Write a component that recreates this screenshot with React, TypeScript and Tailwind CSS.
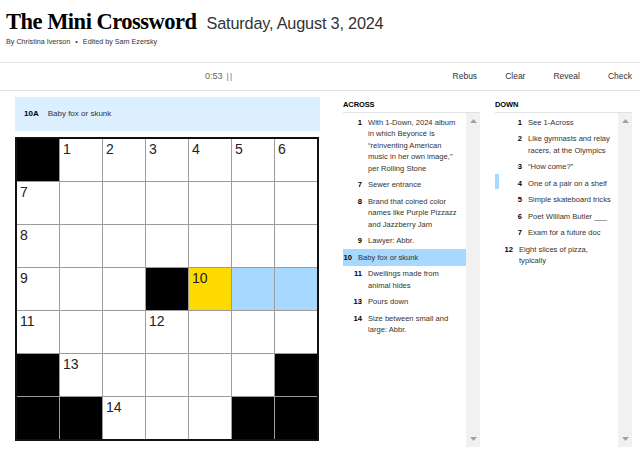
import React from "react"

type Cell = { n?: number; black?: boolean; tone?: "yellow" | "blue" }

const B: Cell = { black: true }
const E: Cell = {}

// grid 7x7
const grid: Cell[][] = [
  [B, { n: 1 }, { n: 2 }, { n: 3 }, { n: 4 }, { n: 5 }, { n: 6 }],
  [{ n: 7 }, E, E, E, E, E, E],
  [{ n: 8 }, E, E, E, E, E, E],
  [{ n: 9 }, E, E, B, { n: 10, tone: "yellow" }, { tone: "blue" }, { tone: "blue" }],
  [{ n: 11 }, E, E, { n: 12 }, E, E, E],
  [B, { n: 13 }, E, E, E, E, B],
  [B, B, { n: 14 }, E, E, B, B],
]

type Clue = { n: number; lines: string[]; active?: boolean; shift?: boolean; mark?: boolean }

const across: Clue[] = [
  {
    n: 1,
    lines: [
      "With 1-Down, 2024 album",
      "in which Beyoncé is",
      "\u201creinventing American",
      "music in her own image,\u201d",
      "per Rolling Stone",
    ],
  },
  { n: 7, lines: ["Sewer entrance"] },
  { n: 8, lines: ["Brand that coined color", "names like Purple Pizzazz", "and Jazzberry Jam"] },
  { n: 9, lines: ["Lawyer: Abbr."] },
  { n: 10, lines: ["Baby fox or skunk"], active: true, shift: true },
  { n: 11, lines: ["Dwellings made from", "animal hides"] },
  { n: 13, lines: ["Pours down"] },
  { n: 14, lines: ["Size between small and", "large: Abbr."] },
]

const down: Clue[] = [
  { n: 1, lines: ["See 1-Across"] },
  { n: 2, lines: ["Like gymnasts and relay", "racers, at the Olympics"] },
  { n: 3, lines: ["\u201cHow come?\u201d"] },
  { n: 4, lines: ["One of a pair on a shelf"], mark: true },
  { n: 5, lines: ["Simple skateboard tricks"] },
  { n: 6, lines: ["Poet William Butler ___"] },
  { n: 7, lines: ["Exam for a future doc"] },
  { n: 12, lines: ["Eight slices of pizza,", "typically"], shift: true },
]

function ClueList({ title, clues, numW, shiftW }: { title: string; clues: Clue[]; numW: string; shiftW: string }) {
  return (
    <div className="w-[137px] flex flex-col">
      <div className="h-[16px] pt-[2px] border-b border-[#e2e2e2] text-[7.5px] font-bold text-black leading-[11px] tracking-[-0.1px]">
        {title}
      </div>
      <div className="flex h-[334px]">
        <ul className="flex-1 pt-[1px]">
          {clues.map((c) => (
            <li
              key={c.n}
              className={`relative flex py-[2.5px] leading-[11.5px] text-[7.6px] ${c.active ? "bg-[#a7d8ff]" : ""}`}
            >
              {c.mark && <span className="absolute left-0 top-[-1px] h-[15px] w-[4px] bg-[#a7d8ff]" />}
              <span className={`${c.shift ? shiftW : numW} shrink-0 text-right font-bold text-black`}>{c.n}</span>
              <span className="pl-[6px] text-[#333] whitespace-nowrap">
                {c.lines.map((l, i) => (
                  <span key={i} className="block">
                    {l}
                  </span>
                ))}
              </span>
            </li>
          ))}
        </ul>
        <div className="w-[14px] bg-[#f1f1f1] flex flex-col items-center justify-between py-[6px]">
          <svg width="7" height="4" viewBox="0 0 7 4">
            <path d="M0 4 L3.5 0 L7 4 Z" fill="#a3a3a3" />
          </svg>
          <svg width="7" height="4" viewBox="0 0 7 4">
            <path d="M0 0 L3.5 4 L7 0 Z" fill="#a3a3a3" />
          </svg>
        </div>
      </div>
    </div>
  )
}

export default function App() {
  return (
    <div className="w-[640px] h-[451px] bg-white overflow-hidden font-['Liberation_Sans',Arial,sans-serif] text-[#333]">
      {/* header */}
      <div className="pl-[6px] pt-[7px] h-[62px]">
        <div className="flex items-baseline gap-[10px]">
          <h1 className="font-['Liberation_Serif','DejaVu_Serif',serif] font-bold text-[22.5px] leading-[29px] tracking-[-0.5px] text-black">
            The Mini Crossword
          </h1>
          <span className="text-[16.3px] font-light text-[#333] tracking-[-0.2px]">Saturday, August 3, 2024</span>
        </div>
        <div className="mt-[1px] text-[7.2px] text-[#333]">
          By Christina Iverson <span className="mx-[3px]">•</span> Edited by Sam Ezersky
        </div>
      </div>

      {/* toolbar */}
      <div className="h-[29px] border-y border-[#e2e2e2] flex items-center text-[9px]">
        <div className="ml-[205px] flex items-center gap-[4px] text-[#666]">
          <span>0:53</span>
          <svg width="5" height="8" viewBox="0 0 5 8">
            <rect x="0" y="0" width="1.2" height="8" fill="#aaa" />
            <rect x="3.5" y="0" width="1.2" height="8" fill="#aaa" />
          </svg>
        </div>
        <div className="ml-auto mr-[8px] flex items-center gap-[28px] text-[8.5px] text-[#333]">
          <span>Rebus</span>
          <span>Clear</span>
          <span>Reveal</span>
          <span>Check</span>
        </div>
      </div>

      {/* main */}
      <div className="flex pt-[6px]">
        <div className="pl-[15px] w-[320px]">
          <div className="h-[34px] w-[305px] bg-[#dcefff] flex items-center px-[9px] text-[8px]">
            <span className="font-bold text-black">10A</span>
            <span className="ml-[9px] text-[#333]">Baby fox or skunk</span>
          </div>
          <div className="mt-[6px] w-[304px] h-[304px] border-2 border-[#111] bg-[#9b9b9b] grid grid-cols-7 grid-rows-7 gap-[1px]">
            {grid.flat().map((c, i) => (
              <div
                key={i}
                className={`relative ${
                  c.black ? "bg-black" : c.tone === "yellow" ? "bg-[#ffda00]" : c.tone === "blue" ? "bg-[#a7d8ff]" : "bg-white"
                }`}
              >
                {c.n && (
                  <span className="absolute left-[3px] top-[3px] text-[14px] leading-[14px] text-[#222]">{c.n}</span>
                )}
              </div>
            ))}
          </div>
        </div>
        <div className="ml-[23px] flex gap-[15px]">
          <ClueList title="ACROSS" clues={across} numW="w-[19px]" shiftW="w-[9px]" />
          <ClueList title="DOWN" clues={down} numW="w-[27px]" shiftW="w-[18px]" />
        </div>
      </div>
    </div>
  )
}
